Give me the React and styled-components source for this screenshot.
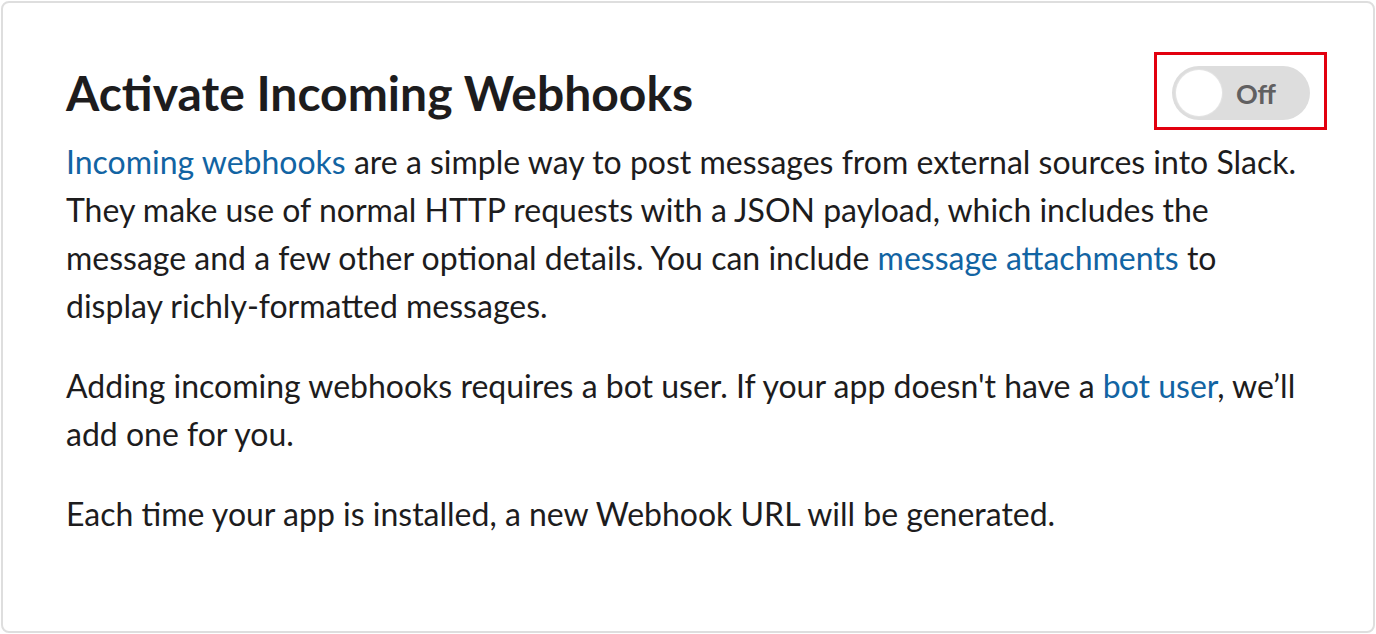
import React from "react";
import styled, { createGlobalStyle } from "styled-components";

const GlobalStyle = createGlobalStyle`
    html, body {
        margin: 0;
        padding: 0;
        background: #fff;
    }
    body {
        font-family: Lato, "Noto Sans", sans-serif;
        color: #1d1c1d;
    }
`;

const Card = styled.section`
    box-sizing: border-box;
    margin: 1px;
    height: calc(100vh - 2px);
    border: 2px solid #dedede;
    border-radius: 8px;
    padding: 49px 46px 0 63px;
    background: #fff;
`;

const Header = styled.div`
    display: flex;
    align-items: center;
    justify-content: space-between;
`;

const Title = styled.h1`
    margin: 0;
    font-size: 48px;
    font-weight: 700;
    line-height: 1.2;
    color: #1d1c1d;
    padding-top: 4px;
`;

const Highlight = styled.div`
    box-sizing: border-box;
    border: 3px solid #e2000f;
    padding: 11px 14px 7px 15px;
`;

const Switch = styled.button`
    display: flex;
    align-items: center;
    box-sizing: border-box;
    width: 138px;
    height: 54px;
    padding: 0 4px;
    border: none;
    border-radius: 27px;
    background: #dddddd;
    cursor: pointer;
    font-family: inherit;
`;

const Knob = styled.span`
    width: 46px;
    height: 46px;
    border-radius: 50%;
    background: #fff;
    box-shadow: 0 0 0 1px #e4e4e4;
`;

const SwitchLabel = styled.span`
    margin-left: auto;
    padding-right: 30px;
    font-size: 27px;
    font-weight: 700;
    color: #616061;
`;

const Text = styled.p`
    max-width: 1240px;
    margin: ${(p) => (p.$first ? "8px" : "32px")} 0 0;
    font-size: 32px;
    line-height: 48px;
`;

const A = styled.a`
    color: #1264a3;
    text-decoration: none;
`;

const App = () => {
    return (
        <>
            <GlobalStyle />
            <Card>
                <Header>
                    <Title>Activate Incoming Webhooks</Title>
                    <Highlight>
                        <Switch type="button" aria-pressed="false">
                            <Knob />
                            <SwitchLabel>Off</SwitchLabel>
                        </Switch>
                    </Highlight>
                </Header>
                <Text $first>
                    <A href="#">Incoming webhooks</A> are a simple way to post messages from external sources into Slack.
                    They make use of normal HTTP requests with a JSON payload, which includes the message and a few
                    other optional details. You can include <A href="#">message attachments</A> to display
                    richly-formatted messages.
                </Text>
                <Text>
                    Adding incoming webhooks requires a bot user. If your app doesn't have a <A href="#">bot user</A>,
                    we’ll add one for you.
                </Text>
                <Text>Each time your app is installed, a new Webhook URL will be generated.</Text>
            </Card>
        </>
    );
};

export default App;
